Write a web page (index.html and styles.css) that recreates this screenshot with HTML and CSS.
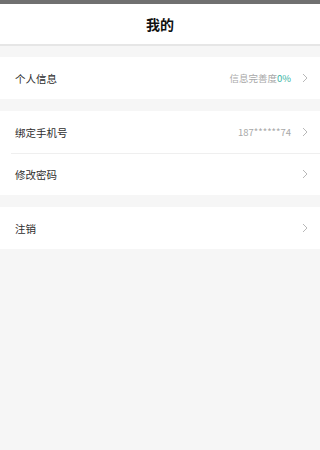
FILE: index.html
```html
<!DOCTYPE html>
<html lang="zh">
<head>
<meta charset="utf-8">
<meta name="viewport" content="width=device-width, initial-scale=1">
<link rel="stylesheet" href="styles.css">
</head>
<body>
<div class="statusbar"></div>
<header class="header"><h1 class="title">我的</h1></header>
<main class="content">
  <section class="group">
    <div class="row">
      <span class="label">个人信息</span>
      <span class="value">信息完善度<em class="accent">0%</em></span>
      <svg class="chev" viewBox="0 0 6 10" width="6" height="10"><path d="M1 1l4 4-4 4" fill="none" stroke="#b8b8b8" stroke-width="1"/></svg>
    </div>
  </section>
  <section class="group">
    <div class="row">
      <span class="label">绑定手机号</span>
      <span class="value">187******74</span>
      <svg class="chev" viewBox="0 0 6 10" width="6" height="10"><path d="M1 1l4 4-4 4" fill="none" stroke="#b8b8b8" stroke-width="1"/></svg>
    </div>
    <div class="row divided">
      <span class="label">修改密码</span>
      <span class="value"></span>
      <svg class="chev" viewBox="0 0 6 10" width="6" height="10"><path d="M1 1l4 4-4 4" fill="none" stroke="#b8b8b8" stroke-width="1"/></svg>
    </div>
  </section>
  <section class="group">
    <div class="row">
      <span class="label">注销</span>
      <span class="value"></span>
      <svg class="chev" viewBox="0 0 6 10" width="6" height="10"><path d="M1 1l4 4-4 4" fill="none" stroke="#b8b8b8" stroke-width="1"/></svg>
    </div>
  </section>
</main>
</body>
</html>
```

FILE: styles.css
```css
html, body {
  margin: 0;
  padding: 0;
  height: 100%;
}
body {
  background: #f6f6f6;
  font-family: "Noto Sans CJK SC", "Noto Sans", sans-serif;
  color: #333;
}
.statusbar {
  height: 4px;
  background: #707070;
}
.header {
  height: 40px;
  background: #fff;
  border-bottom: 2px solid #e6e6e6;
  display: flex;
  align-items: center;
  justify-content: center;
}
.title {
  margin: 0;
  font-size: 14px;
  font-weight: 700;
  color: #111;
  line-height: 1;
}
.content {
  display: flex;
  flex-direction: column;
  gap: 12px;
  padding-top: 11px;
}
.group {
  background: #fff;
  display: flex;
  flex-direction: column;
}
.row {
  height: 42px;
  display: flex;
  align-items: center;
  padding: 0 12px 0 15px;
}
.row.divided {
  position: relative;
}
.row.divided::before {
  content: "";
  position: absolute;
  left: 11px;
  right: 0;
  top: 0;
  height: 1px;
  background: #efefef;
}
.label {
  flex: 1;
  font-size: 10.5px;
  color: #2e2e2e;
}
.value {
  font-size: 9.5px;
  color: #a8a8a8;
  margin-right: 11px;
}
.accent {
  font-style: normal;
  color: #3bb5a5;
}
.chev {
  display: block;
  flex: none;
}
```
